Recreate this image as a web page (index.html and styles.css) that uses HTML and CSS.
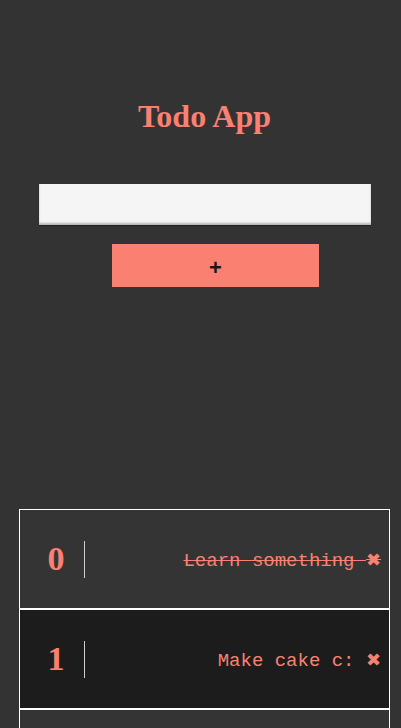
FILE: index.html
```html
<!DOCTYPE html>
<html>
<head>
<meta charset="utf-8">
<link rel="stylesheet" href="styles.css">
</head>
<body>
<div class="app">
  <h1 class="title">Todo App</h1>
  <form class="add-form">
    <input class="todo-input" type="text">
    <button class="add-btn" type="button">+</button>
  </form>
  <ul class="todo-list">
    <li class="todo-item">
      <span class="num">0</span>
      <span class="sep"></span>
      <span class="text done">Learn something <span class="del">✖</span></span>
    </li>
    <li class="todo-item dark">
      <span class="num">1</span>
      <span class="sep"></span>
      <span class="text">Make cake c: <span class="del">✖</span></span>
    </li>
    <li class="todo-item"></li>
  </ul>
</div>
</body>
</html>
```
FILE: styles.css
```css
html, body {
  margin: 0;
  background: #333333;
}
body {
  overflow: hidden;
  height: 728px;
}
.app {
  padding-left: 8px;
}
.title {
  margin: 98px 0 0 0;
  font-family: "Liberation Serif", serif;
  font-weight: bold;
  font-size: 32px;
  line-height: 37px;
  color: #fa8072;
  text-align: center;
}
.add-form {
  display: flex;
  flex-direction: column;
  margin-top: 49px;
}
.todo-input {
  box-sizing: border-box;
  margin-left: 31px;
  width: 332px;
  height: 41px;
  border: none;
  background: #f5f5f5;
  box-shadow: inset 0 -2px 2px rgba(0,0,0,0.25), 0 1px 1px rgba(0,0,0,0.3);
  outline: none;
}
.add-btn {
  margin: 19px 0 0 104px;
  width: 207px;
  height: 43px;
  border: none;
  background: #fa8072;
  color: #1a1a1a;
  font-family: "Liberation Sans", sans-serif;
  font-weight: bold;
  font-size: 22px;
  padding: 4px 0 0 0;
}
.todo-list {
  list-style: none;
  margin: 222px 0 0 11px;
  padding: 0;
  width: 371px;
}
.todo-item {
  box-sizing: border-box;
  height: 100px;
  border: 1px solid #ffffff;
  display: flex;
  align-items: center;
  background: #343434;
}
.todo-item.dark {
  background: #1c1c1c;
}
.num {
  width: 50px;
  margin-left: 11px;
  text-align: center;
  font-family: "Liberation Serif", serif;
  font-weight: bold;
  font-size: 34px;
  color: #fa8072;
}
.sep {
  width: 1px;
  height: 37px;
  margin-left: 3px;
  background: #cccccc;
}
.text {
  flex: 1;
  text-align: right;
  padding: 2px 8px 0 0;
  font-family: "Liberation Mono", monospace;
  font-size: 19px;
  color: #fa8072;
}
.text.done {
  text-decoration: line-through;
}
.del {
  font-family: "DejaVu Sans", sans-serif;
  font-size: 18px;
}
```
